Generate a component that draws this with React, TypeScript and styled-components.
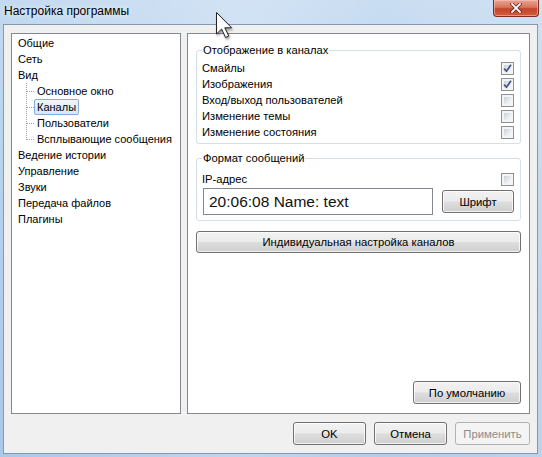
import styled, { createGlobalStyle, css } from 'styled-components';

const GlobalStyle = createGlobalStyle`
  html, body {
    margin: 0;
    padding: 0;
  }
  body {
    font-family: "Liberation Sans", Arial, sans-serif;
    font-size: 11.2px;
    color: #000;
  }
`;

const Window = styled.div`
  position: relative;
  width: 542px;
  height: 457px;
  display: flex;
  flex-direction: column;
  overflow: hidden;
  background:
    linear-gradient(90deg, rgba(255, 255, 255, 0) 0%, rgba(255, 255, 255, 0.25) 45%, rgba(255, 255, 255, 0.1) 70%, rgba(255, 255, 255, 0.2) 100%),
    linear-gradient(180deg, #c3d9f0 0%, #b8d1eb 40%, #abc8e8 100%);
`;

const TitleBar = styled.div`
  height: 24px;
  flex: none;
  display: flex;
  align-items: center;
  padding-left: 4px;
`;

const Title = styled.span`
  font-size: 12px;
  padding-bottom: 2px;
  color: #000;
  text-shadow: 0 0 6px rgba(255, 255, 255, 0.9);
`;

const CloseButton = styled.div`
  align-self: flex-start;
  margin-left: auto;
  margin-right: 3px;
  width: 46px;
  height: 17px;
  display: flex;
  align-items: center;
  justify-content: center;
  border: 1px solid #7d2c22;
  border-top: none;
  border-radius: 0 0 4px 4px;
  box-sizing: border-box;
  background: linear-gradient(180deg, #e8a493 0%, #d9745f 45%, #c2442b 55%, #d45d3c 100%);
  box-shadow: inset 0 0 0 1px rgba(255, 220, 210, 0.45);
`;

const Frame = styled.div`
  flex: 1;
  display: flex;
  padding: 0 4px 3px 3px;
`;

const Client = styled.div`
  flex: 1;
  display: flex;
  flex-direction: column;
  gap: 8px;
  background: #f0f0f0;
  border: 1px solid #8399b2;
  padding: 8px 7px 8px 7px;
`;

const MainRow = styled.div`
  display: flex;
  gap: 6px;
  height: 381px;
`;

const Panel = styled.div`
  box-sizing: border-box;
  background: #fff;
  border: 1px solid #828790;
`;

const TreePanel = styled(Panel)`
  width: 170px;
  padding: 1px 0 0 3px;
  font-size: 11px;
`;

const TreeRow = styled.div<{ $child?: boolean }>`
  display: flex;
  align-items: center;
  height: 16px;
  ${({ $child }) => $child && css`padding-left: 11px;`}
`;

const Branch = styled.span<{ $last?: boolean }>`
  width: 8px;
  height: 16px;
  flex: none;
  background:
    repeating-linear-gradient(to bottom, #a0a0a0 0 1px, transparent 1px 2px) 0 0 / 1px
      ${({ $last }) => ($last ? '9px' : '16px')} no-repeat,
    repeating-linear-gradient(to right, #a0a0a0 0 1px, transparent 1px 2px) 1px 8px / 7px 1px no-repeat;
`;

const TreeLabel = styled.span<{ $selected?: boolean }>`
  box-sizing: border-box;
  height: 16px;
  line-height: 14px;
  padding: 0 2px;
  border: 1px solid transparent;
  border-radius: 2px;
  white-space: nowrap;
  ${({ $selected }) =>
    $selected &&
    css`
      border-color: #84acdd;
      background: linear-gradient(180deg, #eef5fd 0%, #d5e7fc 100%);
    `}
`;

const SettingsPanel = styled(Panel)`
  width: 343px;
  display: flex;
  flex-direction: column;
  padding: 8px 8px 9px 8px;
`;

const Group = styled.fieldset<{ $gap?: number; $bottom?: number }>`
  margin: ${({ $gap }) => $gap ?? 0}px 0 0 0;
  padding: 0 6px ${({ $bottom }) => $bottom ?? 3}px 5px;
  border: 1px solid #d5dfe5;
  border-radius: 3px;
  min-width: 0;
`;

const Legend = styled.legend`
  padding: 0 1px;
  line-height: 16px;
  color: #000;
`;

const Rows = styled.div<{ $top?: number }>`
  display: flex;
  flex-direction: column;
  padding-top: ${({ $top }) => $top ?? 2}px;
`;

const OptionRow = styled.div`
  display: flex;
  align-items: center;
  justify-content: space-between;
  height: 16px;
`;

const Box = styled.span`
  width: 13px;
  height: 13px;
  box-sizing: border-box;
  border: 1px solid #8e8f8f;
  background: #f4f4f4;
  display: flex;
  align-items: center;
  justify-content: center;
  position: relative;

  &::before {
    content: '';
    position: absolute;
    inset: 1px;
    border: 1px solid #f4f4f4;
    background: linear-gradient(135deg, #cbcfd5 0%, #e7e9ed 55%, #f6f7f8 100%);
  }
`;

const CheckMark = styled.svg`
  position: relative;
  z-index: 1;
`;

const FormatRow = styled.div`
  display: flex;
  align-items: center;
  justify-content: space-between;
  padding-top: 1px;
`;

const Preview = styled.div`
  box-sizing: border-box;
  width: 230px;
  height: 27px;
  margin-left: 1px;
  border: 1px solid #828790;
  background: #fff;
  display: flex;
  align-items: center;
  padding-left: 5px;
  font-size: 15.5px;
  color: #111;
`;

const Button = styled.button<{ $w?: number; $h?: number }>`
  box-sizing: border-box;
  width: ${({ $w }) => ($w ? `${$w}px` : '100%')};
  height: ${({ $h }) => $h ?? 23}px;
  padding: 0;
  font-family: inherit;
  font-size: 11.3px;
  color: #000;
  border: 1px solid #707070;
  border-radius: 3px;
  background: linear-gradient(180deg, #f2f2f2 0%, #ebebeb 48%, #dddddd 52%, #cfcfcf 100%);
  box-shadow: inset 0 0 0 1px rgba(255, 255, 255, 0.75);

  &:disabled {
    border-color: #adb2b5;
    background: #f4f4f4;
    color: #8c8c8c;
    box-shadow: none;
  }
`;

const WideButton = styled(Button)`
  margin-top: 10px;
`;

const PanelFooter = styled.div`
  margin-top: auto;
  display: flex;
  justify-content: flex-end;
`;

const DialogButtons = styled.div`
  display: flex;
  justify-content: flex-end;
  gap: 8px;
`;

const Cursor = styled.svg`
  position: absolute;
  left: 216px;
  top: 12px;
  filter: drop-shadow(1px 2px 1px rgba(0, 0, 0, 0.35));
`;

type TreeNode = { label: string; selected?: boolean; children?: TreeNode[] };

const tree: TreeNode[] = [
  { label: 'Общие' },
  { label: 'Сеть' },
  {
    label: 'Вид',
    children: [
      { label: 'Основное окно' },
      { label: 'Каналы', selected: true },
      { label: 'Пользователи' },
      { label: 'Всплывающие сообщения' },
    ],
  },
  { label: 'Ведение истории' },
  { label: 'Управление' },
  { label: 'Звуки' },
  { label: 'Передача файлов' },
  { label: 'Плагины' },
];

const channelOptions = [
  { label: 'Смайлы', checked: true },
  { label: 'Изображения', checked: true },
  { label: 'Вход/выход пользователей', checked: false },
  { label: 'Изменение темы', checked: false },
  { label: 'Изменение состояния', checked: false },
];

const CheckBox = ({ checked }: { checked?: boolean }) => (
  <Box>
    {checked && (
      <CheckMark width="9" height="9" viewBox="0 0 9 9">
        <path d="M1 4.5 L3.4 7.2 L8 0.8" fill="none" stroke="#3c5488" strokeWidth="1.7" />
      </CheckMark>
    )}
  </Box>
);

export default function App() {
  return (
    <>
      <GlobalStyle />
      <Window>
        <TitleBar>
          <Title>Настройка программы</Title>
          <CloseButton>
            <svg width="12" height="10" viewBox="0 0 12 10">
              <path d="M2 1 L10 9 M10 1 L2 9" stroke="#5a1a12" strokeWidth="3.2" strokeLinecap="square" />
              <path d="M2 1 L10 9 M10 1 L2 9" stroke="#fff" strokeWidth="1.8" strokeLinecap="square" />
            </svg>
          </CloseButton>
        </TitleBar>
        <Frame>
          <Client>
            <MainRow>
              <TreePanel>
                {tree.map((node) => (
                  <div key={node.label}>
                    <TreeRow>
                      <TreeLabel $selected={node.selected}>{node.label}</TreeLabel>
                    </TreeRow>
                    {node.children?.map((child, i) => (
                      <TreeRow key={child.label} $child>
                        <Branch $last={i === node.children!.length - 1} />
                        <TreeLabel $selected={child.selected}>{child.label}</TreeLabel>
                      </TreeRow>
                    ))}
                  </div>
                ))}
              </TreePanel>
              <SettingsPanel>
                <Group>
                  <Legend>Отображение в каналах</Legend>
                  <Rows>
                    {channelOptions.map((opt) => (
                      <OptionRow key={opt.label}>
                        <span>{opt.label}</span>
                        <CheckBox checked={opt.checked} />
                      </OptionRow>
                    ))}
                  </Rows>
                </Group>
                <Group $gap={6} $bottom={5}>
                  <Legend>Формат сообщений</Legend>
                  <Rows $top={5}>
                    <OptionRow>
                      <span>IP-адрес</span>
                      <CheckBox />
                    </OptionRow>
                    <FormatRow>
                      <Preview>20:06:08 Name: text</Preview>
                      <Button $w={72}>Шрифт</Button>
                    </FormatRow>
                  </Rows>
                </Group>
                <WideButton $h={22}>Индивидуальная настройка каналов</WideButton>
                <PanelFooter>
                  <Button $w={108}>По умолчанию</Button>
                </PanelFooter>
              </SettingsPanel>
            </MainRow>
            <DialogButtons>
              <Button $w={73}>OK</Button>
              <Button $w={73}>Отмена</Button>
              <Button $w={75} disabled>
                Применить
              </Button>
            </DialogButtons>
          </Client>
        </Frame>
        <Cursor width="18" height="27" viewBox="0 0 18 27">
          <path
            d="M0.5 0.5 L0.5 22 L5.6 17 L9.6 25.5 L12.8 24 L8.8 15.8 L15.6 15.8 Z"
            fill="#fff"
            stroke="#222"
            strokeWidth="1"
            strokeLinejoin="round"
          />
        </Cursor>
      </Window>
    </>
  );
}
